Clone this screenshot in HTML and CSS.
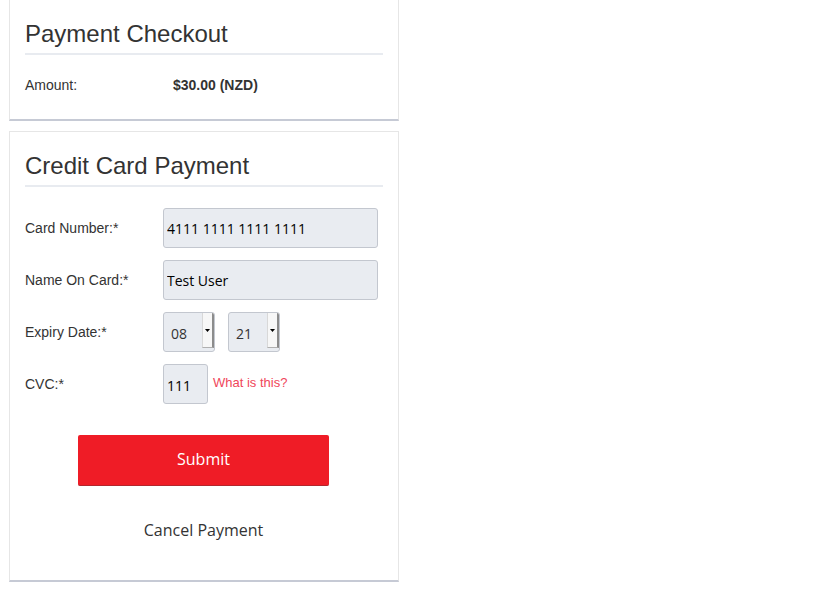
FILE: index.html
```html
<!DOCTYPE html>
<html>
<head>
<meta charset="utf-8">
<link rel="stylesheet" href="styles.css">
</head>
<body>
<div class="page">
  <section class="card card-top">
    <h2 class="card-title">Payment Checkout</h2>
    <div class="amount-row">
      <span class="amount-label">Amount:</span>
      <span class="amount-value">$30.00 (NZD)</span>
    </div>
  </section>
  <section class="card card-pay">
    <h2 class="card-title">Credit Card Payment</h2>
    <form class="pay-form">
      <div class="form-row">
        <label class="form-label">Card Number:*</label>
        <div class="field"><input class="text-input wide" type="text" value="4111 1111 1111 1111"></div>
      </div>
      <div class="form-row">
        <label class="form-label">Name On Card:*</label>
        <div class="field"><input class="text-input wide" type="text" value="Test User"></div>
      </div>
      <div class="form-row">
        <label class="form-label">Expiry Date:*</label>
        <div class="field selects">
          <div class="select-box"><span class="select-val">08</span><span class="select-btn"><svg width="5" height="3" viewBox="0 0 5 3"><path d="M0 0H5L2.5 3Z" fill="#000"/></svg></span></div>
          <div class="select-box"><span class="select-val">21</span><span class="select-btn"><svg width="5" height="3" viewBox="0 0 5 3"><path d="M0 0H5L2.5 3Z" fill="#000"/></svg></span></div>
        </div>
      </div>
      <div class="form-row">
        <label class="form-label">CVC:*</label>
        <div class="field"><input class="text-input cvc" type="text" value="111"><a class="help-link">What is this?</a></div>
      </div>
      <div class="actions">
        <button class="submit-btn" type="button">Submit</button>
        <a class="cancel-link">Cancel Payment</a>
      </div>
    </form>
  </section>
</div>
</body>
</html>
```
FILE: styles.css
```css
html, body {
  margin: 0;
  padding: 0;
  background: #fff;
}
body {
  font-family: "Liberation Sans", Arial, sans-serif;
  color: #333;
}
.page {
  width: 390px;
  margin: -1px 0 0 9px;
  display: flex;
  flex-direction: column;
  gap: 10px;
}
.card {
  border: 1px solid #e6e6e6;
  border-bottom: 2px solid #c6cad5;
  padding: 21px 15px 0 15px;
  background: #fff;
}
.card-top {
  padding-bottom: 24px;
}
.card-pay {
  padding-bottom: 39px;
}
.card-title {
  margin: 0;
  font-size: 24px;
  font-weight: normal;
  line-height: 26px;
  padding-bottom: 6px;
  border-bottom: 2px solid #e8ebf0;
  color: #333;
}
.amount-row {
  display: flex;
  margin-top: 20px;
  font-size: 14px;
  line-height: 20px;
}
.amount-label {
  width: 148px;
}
.amount-value {
  font-weight: bold;
}
.pay-form {
  margin-top: 21px;
  display: flex;
  flex-direction: column;
  gap: 12px;
}
.form-row {
  display: flex;
  align-items: center;
}
.form-label {
  width: 138px;
  font-size: 14px;
  line-height: 20px;
}
.field {
  display: flex;
  align-items: center;
}
.text-input {
  box-sizing: border-box;
  height: 40px;
  border: 1px solid #c3c7cf;
  border-radius: 3px;
  background: #e9ecf1;
  padding: 0 3px;
  font-family: "Open Sans", "Noto Sans", sans-serif;
  font-size: 14px;
  color: #000;
  outline: none;
  margin: 0;
}
.wide {
  width: 215px;
}
.cvc {
  width: 45px;
  padding-top: 2px;
}
.help-link {
  margin-left: 5px;
  margin-top: -4px;
  font-size: 13px;
  color: #f0465a;
  cursor: pointer;
}
.selects {
  gap: 13px;
}
.select-box {
  box-sizing: border-box;
  width: 52px;
  height: 40px;
  display: flex;
  border: 1px solid #c3c7cf;
  border-radius: 3px;
  background: #e9ecf1;
  overflow: hidden;
}
.select-val {
  flex: 1;
  display: flex;
  align-items: center;
  padding-left: 7px;
  padding-top: 2px;
  font-family: "Open Sans", "Noto Sans", sans-serif;
  font-size: 14px;
  color: #333;
}
.select-btn {
  width: 9px;
  margin: 0 0 3px 0;
  background: #f7f7f7;
  border-left: 1px solid #d8d8d8;
  border-right: 2px solid #8c8c8c;
  border-bottom: 1px solid #b0b0b0;
  display: flex;
  align-items: center;
  justify-content: center;
}
.actions {
  margin-top: 19px;
  margin-right: 1px;
  display: flex;
  flex-direction: column;
  align-items: center;
}
.submit-btn {
  width: 251px;
  height: 51px;
  border: none;
  border-bottom: 1px solid #b3262d;
  border-radius: 2px;
  background: #ef1c26;
  color: #fff;
  font-family: "Open Sans", "Noto Sans", sans-serif;
  font-size: 16px;
  cursor: pointer;
  margin: 0;
  padding: 0 0 3px 0;
}
.cancel-link {
  margin-top: 33px;
  font-family: "Open Sans", "Noto Sans", sans-serif;
  font-size: 16px;
  line-height: 22px;
  color: #333;
  cursor: pointer;
}
```
